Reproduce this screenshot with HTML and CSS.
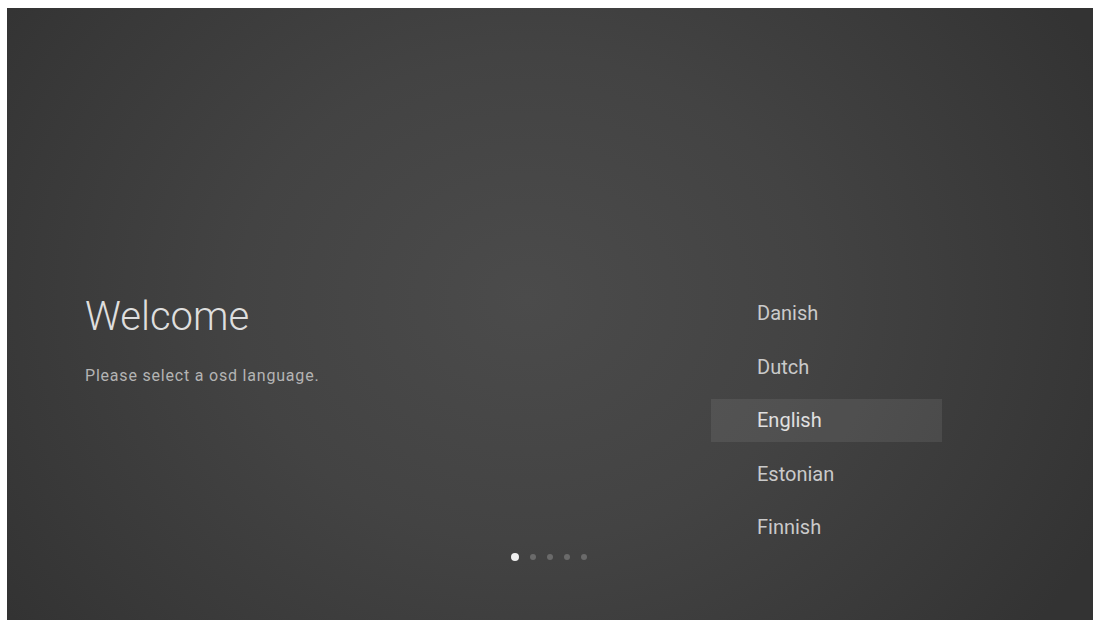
FILE: index.html
```html
<!DOCTYPE html>
<html lang="en">
<head>
<meta charset="utf-8">
<title>Welcome</title>
<link rel="stylesheet" href="styles.css">
</head>
<body>
<div class="screen">
  <div class="main">
    <div class="intro">
      <h1 class="title">Welcome</h1>
      <p class="subtitle">Please select a osd language.</p>
    </div>
    <ul class="langs">
      <li class="lang">Danish</li>
      <li class="lang">Dutch</li>
      <li class="lang selected">English</li>
      <li class="lang">Estonian</li>
      <li class="lang">Finnish</li>
    </ul>
  </div>
  <div class="dots">
    <span class="dot active"></span>
    <span class="dot"></span>
    <span class="dot"></span>
    <span class="dot"></span>
    <span class="dot"></span>
  </div>
</div>
</body>
</html>
```
FILE: styles.css
```css
html, body {
  margin: 0;
  padding: 0;
  background: #ffffff;
}
body {
  width: 1095px;
  height: 623px;
  overflow: hidden;
  font-family: Roboto, "Liberation Sans", sans-serif;
}
.screen {
  margin: 8px 0 0 7px;
  width: 1086px;
  height: 612px;
  box-sizing: border-box;
  background: radial-gradient(ellipse 640px 540px at 520px 290px, #4b4b4b 0%, #434343 45%, #393939 80%, #333333 100%);
  display: flex;
  flex-direction: column;
}
.main {
  display: flex;
  align-items: flex-start;
  height: 540px;
}
.intro {
  padding: 286px 0 0 78px;
}
.title {
  margin: 0;
  font-size: 40px;
  line-height: 46px;
  font-weight: 300;
  color: #dedede;
}
.subtitle {
  margin: 26px 0 0 0;
  font-size: 16px;
  line-height: 20px;
  letter-spacing: 0.8px;
  color: #b4b4b4;
}
.langs {
  list-style: none;
  margin: 0 151px 0 auto;
  padding: 284px 0 0 0;
  width: 231px;
  display: flex;
  flex-direction: column;
  gap: 10.5px;
}
.lang {
  height: 43px;
  line-height: 42px;
  padding-left: 46px;
  font-size: 20px;
  color: #cacaca;
}
.lang.selected {
  background: rgba(255, 255, 255, 0.08);
  color: #e0e0e0;
}
.dots {
  display: flex;
  justify-content: center;
  align-items: center;
  gap: 11px;
  height: 20px;
  margin: -1px 0 0 0;
  padding-right: 3px;
}
.dot {
  width: 6px;
  height: 6px;
  border-radius: 50%;
  background: #6a6a6a;
}
.dot.active {
  width: 8px;
  height: 8px;
  background: #f0f0f0;
}
```
